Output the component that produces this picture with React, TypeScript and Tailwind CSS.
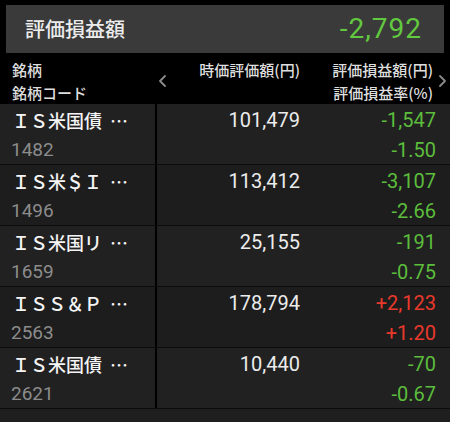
import React from "react";

type Row = {
  name: string;
  code: string;
  value: string;
  pl: string;
  rate: string;
};

const rows: Row[] = [
  { name: "ＩＳ米国債", code: "1482", value: "101,479", pl: "-1,547", rate: "-1.50" },
  { name: "ＩＳ米＄Ｉ", code: "1496", value: "113,412", pl: "-3,107", rate: "-2.66" },
  { name: "ＩＳ米国リ", code: "1659", value: "25,155", pl: "-191", rate: "-0.75" },
  { name: "ＩＳＳ＆Ｐ", code: "2563", value: "178,794", pl: "+2,123", rate: "+1.20" },
  { name: "ＩＳ米国債", code: "2621", value: "10,440", pl: "-70", rate: "-0.67" },
];

const jp = "font-['Noto_Sans_CJK_JP',sans-serif]";
const num = "font-['Roboto','Noto_Sans_CJK_JP',sans-serif]";

function Chevron({ dir }: { dir: "left" | "right" }) {
  return (
    <svg width="9" height="14" viewBox="0 0 9 14" className="shrink-0">
      <polyline
        points={dir === "left" ? "7,2 2,7 7,12" : "2,2 7,7 2,12"}
        fill="none"
        stroke="#8a8a8a"
        strokeWidth="1.8"
        strokeLinecap="round"
        strokeLinejoin="round"
      />
    </svg>
  );
}

export default function App() {
  return (
    <div className="w-[450px] h-[422px] bg-black overflow-hidden flex flex-col">
      {/* Summary */}
      <div className="mx-[6px] mt-[5px] h-[48px] bg-[#3a3a3a] flex items-center justify-between pl-[19px] pr-[22px] shrink-0">
        <span className={`${jp} text-[20px] font-medium text-[#ececec]`}>評価損益額</span>
        <span className={`${num} text-[28px] text-[#62c83f] tracking-[1px]`}>-2,792</span>
      </div>

      {/* Column labels */}
      <div className={`${jp} h-[51px] flex shrink-0 text-[15px] font-medium leading-[23px] text-[#dedede] pt-[5px]`}>
        <div className="w-[155px] pl-[12px] flex flex-col">
          <span>銘柄</span>
          <span>銘柄コード</span>
        </div>
        <div className="w-[145px] flex">
          <div className="pl-[3px] h-[46px] flex items-center">
            <Chevron dir="left" />
          </div>
          <div className="flex-1 text-right">時価評価額(円)</div>
        </div>
        <div className="w-[133px] flex flex-col items-end">
          <span>評価損益額(円)</span>
          <span>評価損益率(%)</span>
        </div>
        <div className="flex-1 h-[46px] flex items-center justify-end pr-[3px]">
          <Chevron dir="right" />
        </div>
      </div>

      {/* Holdings */}
      <div className="flex flex-col shrink-0">
        {rows.map((r, i) => {
          const up = r.pl.startsWith("+");
          const color = up ? "text-[#e8392c]" : "text-[#5cbd3c]";
          return (
            <div
              key={r.code}
              className={`flex h-[61px] border-b border-[#0c0c0c] ${i % 2 === 0 ? "bg-[#212121]" : "bg-[#1d1d1d]"}`}
            >
              <div className="w-[155px] pt-[1px] flex flex-col">
                <span className={`${jp} h-[30px] leading-[30px] pl-[12px] text-[18px] font-medium text-[#f4f4f4] whitespace-nowrap flex`}>
                  {r.name}
                  <span className="ml-[8px] tracking-[1px]">…</span>
                </span>
                <span className={`${num} h-[30px] leading-[30px] pl-[11px] text-[19px] text-[#8c8c8c]`}>
                  {r.code}
                </span>
              </div>
              <div className="w-[2px] bg-black" />
              <div className={`${num} w-[143px] pt-[1px] text-right text-[20px] leading-[30px] text-[#ececec]`}>
                {r.value}
              </div>
              <div className={`${num} w-[136px] pt-[1px] flex flex-col items-end text-[20px] leading-[30px] ${color}`}>
                <span>{r.pl}</span>
                <span>{r.rate}</span>
              </div>
            </div>
          );
        })}
      </div>
      <div className="flex-1 bg-[#1f1f1f]" />
    </div>
  );
}
